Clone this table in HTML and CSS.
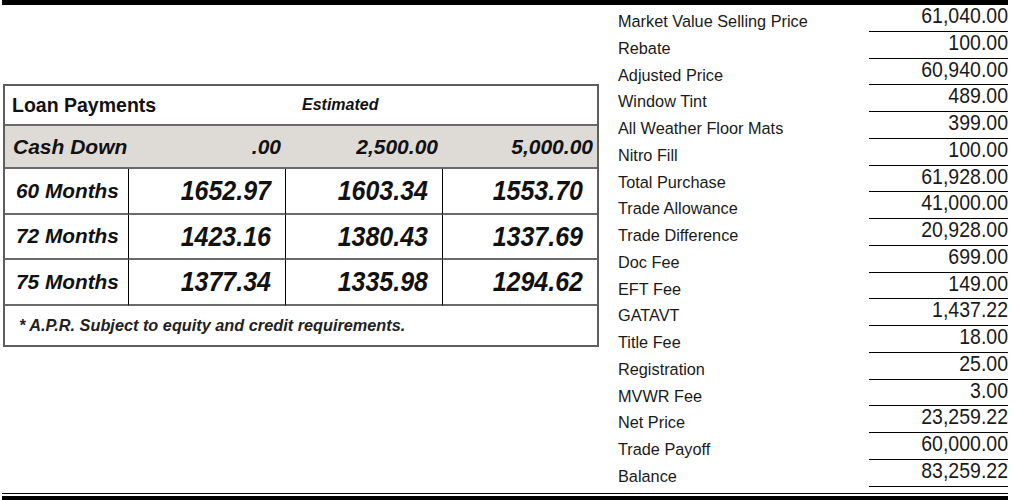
FILE: index.html
```html
<!DOCTYPE html>
<html>
<head>
<meta charset="utf-8">
<link rel="stylesheet" href="styles.css">
</head>
<body>
<div class="page">
  <div class="topbar"></div>
  <div class="main">
    <section class="left">
      <div class="loan">
        <div class="hdr-title">Loan Payments</div>
        <div class="hdr-est">Estimated</div>

        <div class="cash cash-label">Cash Down</div>
        <div class="cash cash-val">.00</div>
        <div class="cash cash-val">2,500.00</div>
        <div class="cash cash-val">5,000.00</div>

        <div class="term">60 Months</div>
        <div class="pay"><span>1652.97</span></div>
        <div class="pay"><span>1603.34</span></div>
        <div class="pay"><span>1553.70</span></div>

        <div class="term">72 Months</div>
        <div class="pay"><span>1423.16</span></div>
        <div class="pay"><span>1380.43</span></div>
        <div class="pay"><span>1337.69</span></div>

        <div class="term">75 Months</div>
        <div class="pay"><span>1377.34</span></div>
        <div class="pay"><span>1335.98</span></div>
        <div class="pay"><span>1294.62</span></div>

        <div class="note">* A.P.R. Subject to equity and credit requirements.</div>
      </div>
    </section>
    <section class="right">
      <div class="lines">
        <div class="lbl">Market Value Selling Price</div><div class="val"><span>61,040.00</span></div>
        <div class="lbl">Rebate</div><div class="val"><span>100.00</span></div>
        <div class="lbl">Adjusted Price</div><div class="val"><span>60,940.00</span></div>
        <div class="lbl">Window Tint</div><div class="val"><span>489.00</span></div>
        <div class="lbl">All Weather Floor Mats</div><div class="val"><span>399.00</span></div>
        <div class="lbl">Nitro Fill</div><div class="val"><span>100.00</span></div>
        <div class="lbl">Total Purchase</div><div class="val"><span>61,928.00</span></div>
        <div class="lbl">Trade Allowance</div><div class="val"><span>41,000.00</span></div>
        <div class="lbl">Trade Difference</div><div class="val"><span>20,928.00</span></div>
        <div class="lbl">Doc Fee</div><div class="val"><span>699.00</span></div>
        <div class="lbl">EFT Fee</div><div class="val"><span>149.00</span></div>
        <div class="lbl">GATAVT</div><div class="val"><span>1,437.22</span></div>
        <div class="lbl">Title Fee</div><div class="val"><span>18.00</span></div>
        <div class="lbl">Registration</div><div class="val"><span>25.00</span></div>
        <div class="lbl">MVWR Fee</div><div class="val"><span>3.00</span></div>
        <div class="lbl">Net Price</div><div class="val"><span>23,259.22</span></div>
        <div class="lbl">Trade Payoff</div><div class="val"><span>60,000.00</span></div>
        <div class="lbl">Balance</div><div class="val"><span>83,259.22</span></div>
      </div>
    </section>
  </div>
  <div class="bottom">
    <div class="thin"></div>
    <div class="thick"></div>
  </div>
</div>
</body>
</html>
```
FILE: styles.css
```css
html, body {
  margin: 0;
  padding: 0;
  background: #fff;
}
body {
  font-family: "Liberation Sans", Arial, sans-serif;
  color: #111;
  width: 1013px;
  height: 500px;
  overflow: hidden;
}
.page {
  display: flex;
  flex-direction: column;
  height: 500px;
}
.topbar {
  height: 5px;
  margin: 0 5px 0 2px;
  background: #000;
}
.main {
  display: flex;
  flex: 0 0 auto;
}
.left {
  width: 596px;
  margin-left: 3px;
  padding-top: 79px;
}
.loan {
  display: grid;
  grid-template-columns: 123px 157px 157px 1fr;
  grid-template-rows: 40px 43px 45.5px 45.5px 45.5px 39.5px;
  border: 2px solid #5e5e5e;
  background: #fff;
}
.hdr-title {
  grid-column: 1 / 3;
  display: flex;
  align-items: center;
  padding-left: 7px;
  font-weight: bold;
  font-size: 19.5px;
  border-bottom: 2px solid #6a6a6a;
}
.hdr-est {
  grid-column: 3 / 5;
  display: flex;
  align-items: center;
  padding-left: 17px;
  font-weight: bold;
  font-style: italic;
  font-size: 16px;
  border-bottom: 2px solid #6a6a6a;
}
.cash {
  background: #dedbd7;
  display: flex;
  align-items: center;
  font-weight: bold;
  font-style: italic;
  font-size: 21px;
  border-bottom: 2px solid #6a6a6a;
}
.cash-label {
  padding-left: 8px;
}
.cash-val {
  justify-content: flex-end;
  padding-right: 4px;
}
.term {
  display: flex;
  align-items: center;
  padding-left: 11px;
  font-weight: bold;
  font-style: italic;
  font-size: 20.8px;
  border-bottom: 2px solid #6a6a6a;
}
.pay {
  display: flex;
  align-items: center;
  justify-content: flex-end;
  padding-right: 14px;
  font-weight: bold;
  font-style: italic;
  font-size: 25px;
  border-left: 1px solid #000;
  border-bottom: 2px solid #6a6a6a;
}
.pay span {
  display: inline-block;
  transform: scaleY(1.1);
}
.note {
  grid-column: 1 / 5;
  display: flex;
  align-items: center;
  padding-left: 14px;
  font-weight: bold;
  font-style: italic;
  font-size: 16.3px;
  color: #222;
}
.right {
  margin-left: 19px;
  width: 390px;
}
.lines {
  display: grid;
  grid-template-columns: 251px 139px;
  grid-auto-rows: 26.75px;
}
.lbl {
  font-size: 16.3px;
  line-height: 16px;
  padding-top: 8px;
  color: #1a1a1a;
}
.val {
  font-size: 19.5px;
  line-height: 20px;
  text-align: right;
  border-bottom: 1px solid #000;
  color: #1a1a1a;
}
.val span {
  display: inline-block;
  transform: scaleY(1.12);
  transform-origin: 50% 45%;
}
.bottom {
  margin: auto 5px 0 2px;
  display: flex;
  flex-direction: column;
}
.thin {
  height: 1px;
  background: #000;
  margin-bottom: 2px;
}
.thick {
  height: 4px;
  background: #000;
}
```
